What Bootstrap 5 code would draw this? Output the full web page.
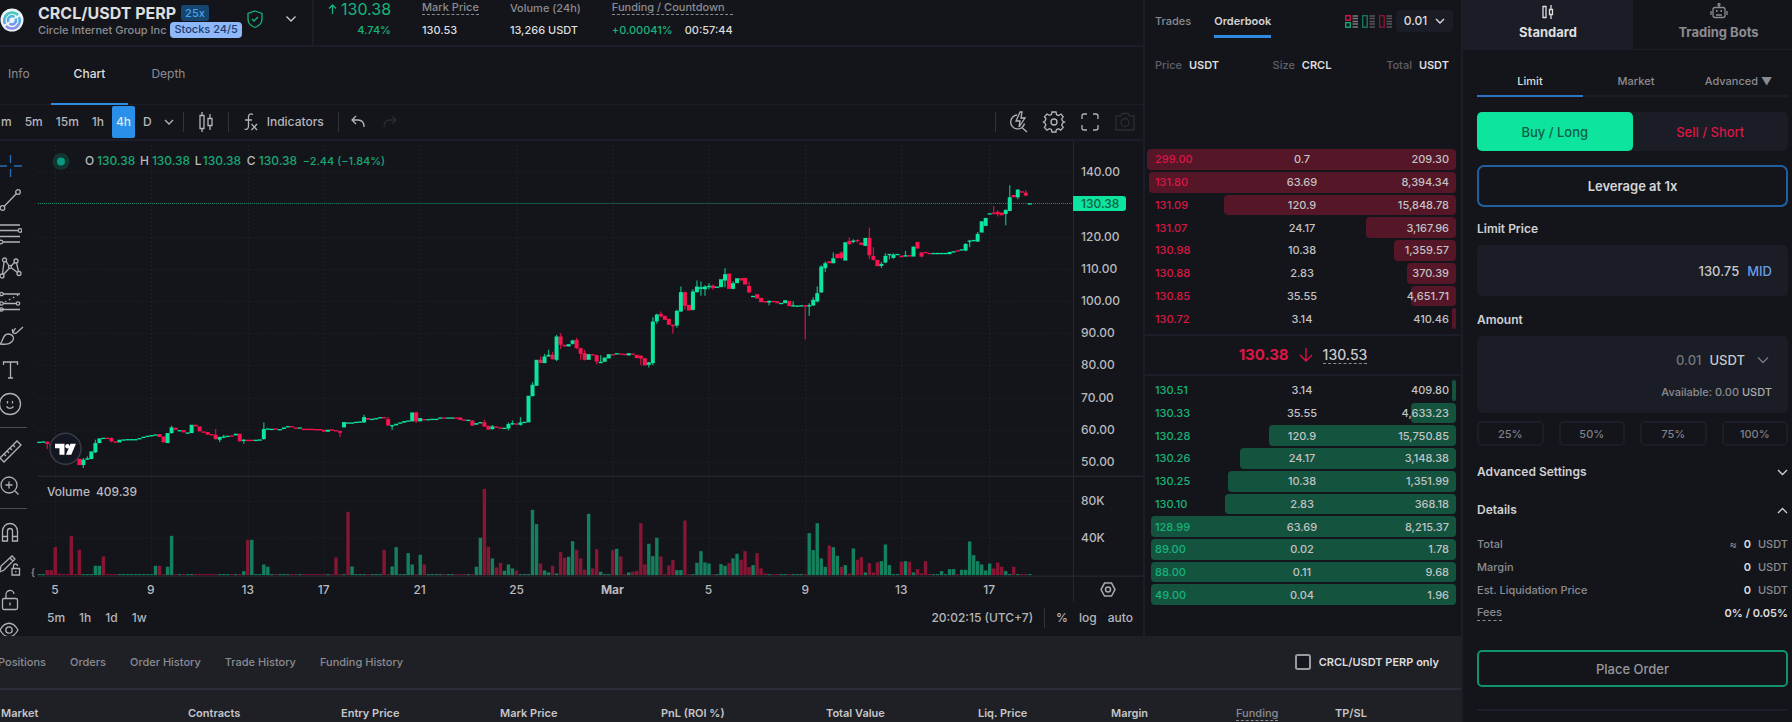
<!DOCTYPE html>
<html lang="en" data-bs-theme="dark">
<head>
<meta charset="utf-8">
<meta name="viewport" content="width=device-width, initial-scale=1">
<title>CRCL/USDT PERP</title>
<link rel="stylesheet" href="https://cdn.jsdelivr.net/npm/bootstrap@5.3.0/dist/css/bootstrap.min.css">
<style>
:root{--bg:#14151a;--line:#1d1d29;--panel:#1a1d25;--dim:#8b8c92;--txt:#c9c9cc;--hi:#dededf;--green:#14b57c;--mint:#0de59e;--red:#dc1646;--blue:#2f8be0}
body{background:var(--bg);color:var(--txt);font-family:Inter,"Liberation Sans",sans-serif;font-size:11px;font-weight:500;line-height:16px;overflow:hidden}
button,.bare{background:none;border:0;padding:0;color:inherit;font:inherit}
svg{display:block;flex:none;fill:none;stroke:currentColor;stroke-width:1.3}
a{color:inherit;text-decoration:none}
.terminal{min-height:100vh}
.dim{color:var(--dim)}.hi{color:var(--hi)}.up{color:var(--green)}.down{color:var(--red)}
.hint{border-bottom:1px dashed #8b8c92;line-height:14px}
.bl{border-left:2px solid var(--line)}.bb{border-bottom:2px solid var(--line)}
.market-head{height:47px;white-space:nowrap}
.pair{width:312px}
.pair-name{font-size:16px;line-height:18px;font-weight:700}
.lev{background:#16466f;color:#4aa3ea;border-radius:3px;padding:0 4px;height:16px}
.stock-tag{background:#8fb8f8;color:#1d3c70;border-radius:4px;padding:0 4px;line-height:15px}
.stats{gap:31px;padding-left:14px}
.stats>div{display:flex;flex-direction:column;gap:6px}
.last-price{font-size:16px;line-height:18px;font-weight:400}
.view-tabs{height:58px;border-bottom:1px solid var(--line);font-size:12px;font-weight:400}
.view-tabs a{padding:19px 23px 0;color:var(--dim);height:58px}
.view-tabs a.active{color:var(--hi);font-weight:500;border-bottom:2px solid var(--blue)}
.view-tabs a:first-child{padding:19px 21px 0 8px}
.toolbar{height:36px;color:#b4b5ba;font-size:12px;padding-left:1px}
.toolbar .vr,.chart-foot .vr{align-self:center;min-height:0;opacity:1;background:#33343b;height:20px;width:1px}
.toolbar button.on{background:#2a8fe9;color:#dbe6f3;width:23px;height:32px;border-radius:2px}
.tools{width:30px;color:#b0b1b7;margin-bottom:-10px}
.tools hr{margin:6px 0;width:27px;border-color:#4a4b53;opacity:1}
.tools button{height:34px;display:flex;align-items:center}
.plot{width:100%;height:auto}
.plot text{stroke:none;fill:#b9babf;font-size:12px}
.plot .move{font-size:11px;fill:#1aa876}
.chart-foot{height:32px;font-size:12px;color:#b4b5ba}
.dock{background:#1f2026}
.dock-tabs{height:54px;border-bottom:2px solid #2b2e38}
.dock-tabs a{color:var(--dim)}
.dock table{width:100%;table-layout:fixed;margin:0}
.dock th{font-weight:600;color:#c6c6c9;padding:15px 0 0 1px;line-height:16px}
.tickbox{width:16px;height:16px;margin:0;border:2px solid #9a9ba0;border-radius:0;background:#14171d}
.book{width:318px;flex:none;border-left:2px solid var(--line)}
.book-tabs{height:46px}
.book-tabs a{padding-top:13px;height:38px}
.book-tabs a.active{border-bottom:3px solid var(--blue);color:#d4d4d7;font-weight:600}
.tick-select{background:var(--panel);border-radius:4px;height:22px;width:57px;color:var(--hi);font-size:12px}
.cols{display:grid;grid-template-columns:1fr 1fr 1fr}
.cols>:nth-child(2){text-align:center}.cols>:nth-child(3){text-align:right}
.ladder{display:grid;grid-auto-rows:1fr;gap:2px}
.level{position:relative;align-items:center;padding:0 7px 0 8px;color:#c2c3c5}
.level>span{position:relative;z-index:1}
.level>i{position:absolute;right:0;top:0;bottom:0;border-radius:4px}
.asks{height:180px;margin:76px 5px 5px 2px}.bids{height:225px;margin:4px 5px 31px 2px}
.asks i{background:#551627}.bids i{background:#14543f}
.asks .level>:nth-child(1){color:var(--red)}.bids .level>:nth-child(1){color:var(--green)}
.mid{height:42px;border-top:2px solid var(--line);border-bottom:2px solid var(--line);font-size:14px}
.ticket{width:331px;flex:none;border-left:2px solid var(--line)}
.modes{height:50px;border-bottom:1px solid var(--line);font-weight:700;font-size:13px}
.modes button{color:var(--dim)}
.modes button.on{background:var(--panel);color:var(--hi)}
.ticket-body{padding:14px 4px 0 14px}
.kinds{border-bottom:2px solid #1b1d27;height:33px}
.kinds a{color:var(--dim);text-align:center;height:33px;line-height:34px;white-space:nowrap}
.kinds a.active{color:var(--hi);border-bottom:2px solid #2c74bd}
.sides{background:var(--panel);border-radius:5px;height:39px;margin-top:15px;font-size:13px}
.sides button{border-radius:5px}
.sides .on{background:var(--mint);color:#0e5f47}
.lever{height:42px;border:2px solid #225f9e;border-radius:7px;margin-top:14px;color:#d6d6d8;font-weight:600;font-size:13px}
.cap{font-weight:600;color:#d0d0d3;font-size:12px}
.field{background:var(--panel);border-radius:5px;padding-right:16px;font-size:13px}
.field input{width:70px;text-align:right;outline:0}
.field input::placeholder{color:#74757c;opacity:1}
.pcts{gap:15px;margin-top:8px}
.pcts button{flex:1;height:25px;border:2px solid #1c1d28;border-radius:5px;color:#808188}
.acc{height:38px}
.facts{margin:7px 0 0;display:grid;gap:7px}
.facts dt{font-weight:500;color:var(--dim)}
.place{height:37px;border:2px solid #10936a;border-radius:5px;margin-top:29px;color:#97989d;font-size:13px}
</style>
</head>
<body>
<div class="terminal d-flex">
<div class="flex-fill d-flex flex-column" style="min-width:0">
<div class="d-flex">
<main class="flex-fill" style="min-width:0">
  <header class="market-head d-flex bb">
    <div class="pair d-flex align-items-start">
      <svg width="24" height="24" viewBox="0 0 24 24" style="margin:8px 14px 0 0" stroke="none"><defs><linearGradient id="ring" x1="0" y1="0" x2="0" y2="24" gradientUnits="userSpaceOnUse"><stop offset="0" stop-color="#3fd9a4"/><stop offset=".5" stop-color="#55aee8"/><stop offset="1" stop-color="#a77bf0"/></linearGradient></defs><circle cx="12" cy="12" r="11.5" fill="#eef3f6" stroke="none"/><g stroke="url(#ring)" stroke-width="2.6"><path d="M5 16a8 8 0 0 1 13-9"/><path d="M19 9a8 8 0 0 1-13 9"/><path d="M8.500 14a4 4 0 0 1 6-5M15.500 10.500a4 4 0 0 1-6 5"/></g></svg>
      <div>
        <div class="d-flex align-items-center pt-1" style="gap:5px"><h1 class="pair-name hi m-0">CRCL/USDT PERP</h1><span class="lev">25x</span></div>
        <div class="d-flex gap-1"><span class="dim">Circle Internet Group Inc</span><span class="stock-tag">Stocks 24/5</span></div>
      </div>
      <div class="d-flex ms-auto align-items-center" style="gap:21px;padding:9px 15px 0 0">
      <svg class="up" width="18" height="20" viewBox="0 0 18 20" stroke-width="1.6"><path d="M9 2l7 2.500v5.500c0 4-3 7-7 8.500-4-1.500-7-4.500-7-8.500V4.500z"/><path d="M6 10l2 2 4-4"/></svg>
      <svg width="12" height="8" viewBox="0 0 12 8" stroke-width="1.7"><path d="M1.500 1.500L6 6l4.500-4.500"/></svg>
      </div>
    </div>
    <div class="stats bl d-flex">
      <div class="text-end up" style="gap:4px"><span class="last-price d-flex align-items-center gap-1"><svg width="9" height="10" viewBox="0 0 9 10"><path d="M4.500 10V1M1 4.500L4.500 1 8 4.500"/></svg>130.38</span><span>4.74%</span></div>
      <div><span class="dim hint">Mark Price</span><span class="hi" style="margin-top:1px">130.53</span></div>
      <div><span class="dim">Volume (24h)</span><span class="hi">13,266 USDT</span></div>
      <div><span class="dim hint">Funding / Countdown</span><span class="d-flex" style="gap:12px;margin-top:1px"><span class="up">+0.00041%</span><span class="hi">00:57:44</span></span></div>
    </div>
  </header>
  <nav class="view-tabs d-flex"><a href="#">Info</a><a href="#" class="active">Chart</a><a href="#">Depth</a></nav>
  <div class="toolbar d-flex align-items-center bb">
    <div class="d-flex align-items-center" style="gap:13px"><button>m</button><button>5m</button><button>15m</button><button>1h</button></div>
    <button class="on" style="margin:0 8px">4h</button><button>D</button>
    <button class="px-1" style="margin:0 5px 0 8px" aria-label="Intervals"><svg width="10" height="6" viewBox="0 0 10 6"><path d="M1 1l4 4 4-4"/></svg></button>
    <span class="vr"></span>
    <button style="margin:0 14px" aria-label="Candles"><svg width="16" height="24" viewBox="0 0 16 24"><path d="M4 2v3M4 19v3M2 5.500h4v13h-4zM12 4v4M12 16v4M10 8.500h4v7h-4z"/></svg></button>
    <span class="vr"></span>
    <button class="d-flex align-items-center" style="gap:9px;margin:0 14px"><svg width="15" height="20" viewBox="0 0 15 20"><path d="M10 2.500C7 1 5.500 2.500 5.500 5v9c0 3-2 4-4 3M2 8h7M8.500 12l5.500 6M14 12l-5.500 6"/></svg>Indicators</button>
    <span class="vr"></span>
    <button style="margin:0 18px 0 12px" aria-label="Undo"><svg width="14" height="14" viewBox="0 0 14 14"><path d="M5 1L1 5l4 4M1 5h6c4 0 6 3 6 7"/></svg></button>
    <button style="color:#2b2c33" aria-label="Redo"><svg width="14" height="14" viewBox="0 0 14 14"><path d="M9 1l4 4-4 4M13 5H7c-4 0-6 3-6 7"/></svg></button>
    <div class="d-flex align-items-center ms-auto" style="gap:13px;padding-right:7px">
      <span class="vr"></span>
      <svg width="20" height="24" viewBox="0 0 20 24"><path d="M8 5a7 7 0 1 0 7.500 8.500M13.500 18l4.500 4M11 2L7 11h4l-1 6 6-9h-4l1-6z"/></svg>
      <svg width="24" height="24" viewBox="0 0 24 24" stroke-width="1.5"><path d="M10 2h4l.6 2.700 2 .8 2.400-1.500 2.200 2.800-1.500 2.200.8 2L22.500 12l-2 1.200-.8 2 1.500 2.300-2.600 2.600-2.300-1.300-2 .8L14 22h-4l-.6-2.500-2-.8-2.400 1.400-2.600-2.700 1.500-2.200-.8-2L1.500 12l1.700-1.200.7-2-1.400-2.100L5 4l2.400 1.400 2-.8z"/><circle cx="12" cy="12" r="3"/></svg>
      <svg width="22" height="22" viewBox="0 0 22 22" stroke-width="1.6"><path d="M3 8V5a2 2 0 0 1 2-2h3M14 3h3a2 2 0 0 1 2 2v3M19 14v3a2 2 0 0 1-2 2h-3M8 19H5a2 2 0 0 1-2-2v-3"/></svg>
      <svg width="22" height="20" viewBox="0 0 22 20" color="#2b2c33"><path d="M2 4h4.500l1.500-2.500h6L15.500 4H20v14H2z"/><circle cx="11" cy="10.500" r="4"/></svg>
    </div>
  </div>
  <div class="d-flex">
    <div class="tools pt-2" role="toolbar">
      <button aria-label="Cross" style="color:#2370b8"><svg width="22" height="24" viewBox="0 0 22 24"><path d="M10.500 1v8M10.500 15v8M0 12h7M14 12h8"/></svg></button>
      <button aria-label="Trend line"><svg width="22" height="24" viewBox="0 0 22 24"><circle cx="18" cy="4" r="2.300"/><circle cx="2.500" cy="20" r="2.300"/><path d="M4 18.500L16.500 5.500"/></svg></button>
      <button aria-label="Fibonacci"><svg width="22" height="24" viewBox="0 0 22 24"><path d="M0 3h20M0 8.500h18M0 14.500h20M3 20h17"/><circle cx="20" cy="8.500" r="1.800"/><circle cx="1" cy="20" r="1.800"/></svg></button>
      <button aria-label="Pattern"><svg width="22" height="24" viewBox="0 0 22 24"><circle cx="4.500" cy="4" r="2"/><circle cx="16" cy="5" r="2"/><circle cx="2" cy="20" r="2"/><circle cx="19" cy="17.500" r="2"/><circle cx="10" cy="11" r="1.500"/><path d="M4 6L2.500 18M6 5l3 5M11 10l4-4M16.500 7l2 8.500M3.500 18.500L9 12.500M11.500 12l6 4.500"/></svg></button>
      <button aria-label="Forecast"><svg width="22" height="24" viewBox="0 0 22 24"><path d="M3 4h17M3 13.500h13M0 19.500h20"/><circle cx="1.500" cy="4" r="1.700"/><circle cx="1.500" cy="13.500" r="1.700"/><circle cx="18" cy="13.500" r="1.700"/><circle cx="1.500" cy="19.500" r="1.700"/><path d="M5 12L20 4" stroke-dasharray="1.500 3"/></svg></button>
      <button aria-label="Brush"><svg width="24" height="24" viewBox="0 0 24 24"><path d="M0 20c3-1 2-10 8-10 5 0 7 4 4 7.500-3 3.500-8 3-12 2.500zM12.500 5c-.5 4 2 6 5 3l5.500-5M15.500 4l-3 5"/></svg></button>
      <button aria-label="Text"><svg width="22" height="24" viewBox="0 0 22 24" stroke-width="1.500"><path d="M3.500 7V4h14v3M10.500 4v16M8 20h5"/></svg></button>
      <button aria-label="Emoji"><svg width="22" height="24" viewBox="0 0 22 24"><circle cx="10" cy="12" r="10.500"/><path d="M6.500 14.500c2 2.500 5 2.500 7 0M7.500 9v2.500M12.500 9v2.500"/></svg></button>
      <hr>
      <button aria-label="Measure"><svg width="22" height="24" viewBox="0 0 22 24"><path d="M0 19L17 2l4 4L4 23zM4 15l2 2M7 12l2 2M10 9l2 2M13 6l2 2"/></svg></button>
      <button aria-label="Zoom in"><svg width="22" height="24" viewBox="0 0 22 24"><circle cx="9" cy="12" r="8"/><path d="M15 18l3.500 3.500M9 8.500v7M5.500 12h7"/></svg></button>
      <hr>
      <button aria-label="Magnet"><svg width="22" height="24" viewBox="0 0 22 24"><path d="M2.500 21v-10a7.500 7.500 0 0 1 15 0v10h-5v-10a2.500 2.500 0 0 0-5 0v10zM2.500 16.500h5M12.500 16.500h5"/></svg></button>
      <button aria-label="Keep drawing"><svg width="22" height="24" viewBox="0 0 22 24"><path d="M0 17l1-5L12 2l3 3L4 16l-4 2M10 4l3 3M12 14.500h7.500v6.500H12zM13.500 14.500v-2.500a2 2 0 0 1 4 0M15.800 17v1.500"/></svg></button>
      <button aria-label="Lock"><svg width="22" height="24" viewBox="0 0 22 24"><rect x="2.500" y="10.500" width="15" height="11" rx="1.500"/><path d="M6 10V7a4 4 0 0 1 8-1M10 14.500v3"/></svg></button>
      <button aria-label="Hide" style="height:26px"><svg width="22" height="16" viewBox="0 0 22 16"><path d="M0 8c5-9 13-9 18 0-5 9-13 9-18 0z"/><circle cx="9" cy="8" r="3.200"/></svg></button>
    </div>
    <div class="flex-fill" style="min-width:0">
      <svg class="plot" id="plot" viewBox="30 141 1114 463" role="img" aria-label="Price and volume"></svg>
      <div class="chart-foot d-flex align-items-center">
        <div class="d-flex" style="gap:14px;padding:0 0 4px 17px"><button>5m</button><button>1h</button><button>1d</button><button>1w</button></div>
        <div class="d-flex align-items-center ms-auto" style="gap:11px;padding:0 10px 4px 0"><span>20:02:15 (UTC+7)</span><span class="vr"></span><button>%</button><button>log</button><button>auto</button></div>
      </div>
    </div>
  </div>
</main>

<section class="book">
  <div class="book-tabs d-flex" style="padding:0 8px 0 10px">
    <a href="#" class="dim" style="margin-right:23px">Trades</a><a href="#" class="active">Orderbook</a>
    <div class="d-flex ms-auto gap-1" style="padding:10px 0 0">
      <svg width="13" height="13" viewBox="0 0 13 13" style="margin-top:5px"><rect x=".7" y=".7" width="4.500" height="4.500" stroke="#dc1646"/><rect x=".7" y="7.700" width="4.500" height="4.500" stroke="#14b57c"/><path d="M7.500 1H13M7.500 3.500H13M7.500 6.500H13M7.500 9H13M7.500 12H13" stroke="#77787e"/></svg>
      <svg width="13" height="13" viewBox="0 0 13 13" style="margin-top:5px"><rect x=".7" y=".7" width="4.500" height="11.500" stroke="#14805a"/><path d="M7.500 1H13M7.500 3.500H13M7.500 6.500H13M7.500 9H13M7.500 12H13" stroke="#55565c"/></svg>
      <svg width="13" height="13" viewBox="0 0 13 13" style="margin-top:5px"><rect x=".7" y=".7" width="4.500" height="11.500" stroke="#8f1535"/><path d="M7.500 1H13M7.500 3.500H13M7.500 6.500H13M7.500 9H13M7.500 12H13" stroke="#55565c"/></svg>
      <button class="tick-select d-flex align-items-center justify-content-center gap-2">0.01<svg width="10" height="6" viewBox="0 0 10 6" stroke-width="1.700"><path d="M1 1l4 4 4-4"/></svg></button>
    </div>
  </div>
  <div class="cols" style="padding:11px 12px 0 10px;color:#5f6068"><span>Price <b class="hi ms-1 fw-semibold">USDT</b></span><span>Size <b class="hi ms-1 fw-semibold">CRCL</b></span><span>Total <b class="hi ms-1 fw-semibold">USDT</b></span></div>
  <div class="ladder asks" id="asks"></div>
  <div class="mid d-flex align-items-center justify-content-center"><b class="down" style="font-size:15px">130.38</b><svg class="down" width="14" height="16" viewBox="0 0 14 16" style="margin:0 10px" stroke-width="1.800"><path d="M7 1v13M1 8l6 6 6-6"/></svg><span class="hint" style="line-height:16px">130.53</span></div>
  <div class="ladder bids" id="bids"></div>
</section>
</div>

<section class="dock flex-fill">
  <div class="dock-tabs d-flex align-items-center" style="gap:24px;padding-right:22px">
    <a href="#" class="hi" style="margin-left:-2px">Positions</a><a href="#">Orders</a><a href="#">Order History</a><a href="#">Trade History</a><a href="#">Funding History</a>
    <label class="d-flex align-items-center gap-2 ms-auto hi fw-semibold"><input type="checkbox" class="form-check-input tickbox">CRCL/USDT PERP only</label>
  </div>
  <table>
    <colgroup><col style="width:187px"><col style="width:153px"><col style="width:159px"><col style="width:161px"><col style="width:165px"><col style="width:152px"><col style="width:133px"><col style="width:125px"><col style="width:99px"><col></colgroup>
    <thead><tr><th>Market</th><th>Contracts</th><th>Entry Price</th><th>Mark Price</th><th>PnL (ROI %)</th><th>Total Value</th><th>Liq. Price</th><th>Margin</th><th><span class="hint dim fw-medium">Funding</span></th><th>TP/SL</th></tr></thead>
  </table>
</section>
</div>

<aside class="ticket">
  <div class="modes d-flex">
    <button class="on d-flex flex-column align-items-center" style="width:170px;padding-top:5px;gap:5px"><svg width="14" height="14" viewBox="0 0 14 14" stroke-width="1.500"><path d="M2 1.500h3v11H2zM10 0v4M10 10v4M8.500 4.500h3v5h-3z"/></svg>Standard</button>
    <button class="flex-fill d-flex flex-column align-items-center" style="padding:3px 0 0 12px;gap:5px"><svg width="18" height="16" viewBox="0 0 18 16" stroke-width="1.500"><rect x="3" y="4.500" width="12" height="10" rx="2"/><path d="M9 4.500V2M1 8v4M17 8v4M6 12h6"/><circle cx="9" cy="1.500" r="1"/><path d="M6 8h1.500M10.500 8H12" stroke-width="2"/></svg>Trading Bots</button>
  </div>
  <form class="ticket-body" onsubmit="return false">
    <nav class="kinds d-flex"><a href="#" class="active" style="width:106px">Limit</a><a href="#" style="width:106px">Market</a><a href="#" class="flex-fill">Advanced ▼</a></nav>
    <div class="sides d-flex"><button type="button" class="on w-50">Buy / Long</button><button type="button" class="down w-50">Sell / Short</button></div>
    <button type="button" class="lever w-100">Leverage at 1x</button>
    <label class="cap d-block" for="lp" style="margin:14px 0 8px">Limit Price</label>
    <div class="field d-flex align-items-center justify-content-end gap-2" style="height:51px"><input id="lp" class="bare" value="130.75"><button type="button" style="color:#6b9be8">MID</button></div>
    <label class="cap d-block" for="am" style="margin:16px 0 8px">Amount</label>
    <div class="field" style="height:77px;padding-top:16px">
      <div class="d-flex align-items-center justify-content-end gap-2"><input id="am" class="bare" placeholder="0.01"><button type="button" class="d-flex align-items-center" style="gap:12px">USDT<svg width="12" height="8" viewBox="0 0 12 8" color="#77787e" style="margin-right:3px"><path d="M1 1.500l5 5 5-5"/></svg></button></div>
      <div class="dim text-end" style="margin-top:16px;font-size:11px">Available: 0.00 <span style="color:#aaabaf">USDT</span></div>
    </div>
    <div class="pcts d-flex"><button type="button">25%</button><button type="button">50%</button><button type="button">75%</button><button type="button">100%</button></div>
    <button type="button" class="acc cap w-100 d-flex align-items-center justify-content-between" style="margin-top:7px">Advanced Settings<svg width="11" height="7" viewBox="0 0 11 7"><path d="M1 1l4.500 4.500L10 1"/></svg></button>
    <button type="button" class="acc cap w-100 d-flex align-items-center justify-content-between">Details<svg width="11" height="7" viewBox="0 0 11 7"><path d="M1 6l4.500-4.500L10 6"/></svg></button>
    <dl class="facts">
      <div class="d-flex justify-content-between"><dt>Total</dt><dd class="m-0 dim">≈ <b class="hi fw-semibold mx-1">0</b> USDT</dd></div>
      <div class="d-flex justify-content-between"><dt>Margin</dt><dd class="m-0 dim"><b class="hi fw-semibold me-1">0</b> USDT</dd></div>
      <div class="d-flex justify-content-between"><dt>Est. Liquidation Price</dt><dd class="m-0 dim"><b class="hi fw-semibold me-1">0</b> USDT</dd></div>
      <div class="d-flex justify-content-between"><dt class="hint">Fees</dt><dd class="m-0 hi fw-semibold">0% / 0.05%</dd></div>
    </dl>
    <button type="submit" class="place w-100">Place Order</button>
    <div style="border-top:2px solid var(--line);margin-top:22px"></div>
  </form>
</aside>
</div>

<script src="https://cdn.jsdelivr.net/npm/bootstrap@5.3.0/dist/js/bootstrap.bundle.min.js"></script>
<script>
// order book: price, size, total, depth in percent
const asks=[['299.00','0.7','209.30',100],['131.80','63.69','8,394.34',99.4],['131.09','120.9','15,848.78',75],['131.07','24.17','3,167.96',29],['130.98','10.38','1,359.57',20],['130.88','2.83','370.39',16],['130.85','35.55','4,651.71',14.6],['130.72','3.14','410.46',1.3]];
const bids=[['130.51','3.14','409.80',1.3],['130.33','35.55','4,633.23',14.6],['130.28','120.9','15,750.85',60.4],['130.26','24.17','3,148.38',69.8],['130.25','10.38','1,351.99',73.7],['130.10','2.83','368.18',74.7],['128.99','63.69','8,215.37',98.7],['89.00','0.02','1.78',98.7],['88.00','0.11','9.68',98.7],['49.00','0.04','1.96',98.7]];
const rows=l=>l.map(r=>`<div class="level cols"><span>${r[0]}</span><span>${r[1]}</span><span>${r[2]}</span><i style="width:${r[3]}%"></i></div>`).join('');
document.getElementById('asks').innerHTML=rows(asks);
document.getElementById('bids').innerHTML=rows(bids);

// candles: open close [high low], three scale units per plot unit; each part has its own base
const parts=[
[-330,`937 936|937 935|936 943 936 958|943 950|950 958|958 965|965 970|970 976|976 982|982 987|987 1006|1006 990 985 1015|990 986 980 990|988 965|968 940 930 970|940 926|927 924|924 926|925 935 923 938|935 938|938 930|930 929|929 928|929 928|929 928|928 925|925 921|921 918|918 916|916 914|913 922|920 938|940 910|910 893 888 912|894 900|903 901|901 908|910 908|910 885|885 890|890 905|905 907|907 915|913 915|915 928 898 930|930 922 920 937|922 920 915 925|920 918|917 919|917 912|912 935|932 930 928 942|930 932|930 932|932 930|930 929|928 898 878 930|900 896|898 897|896 898|901 898|898 893|893 889|889 893|893 894|894 893|897 899|897 899|897 899|898 900|898 900|900 906|906 900|899 903|901 904|904 909 902 922|893 877|880 878|880 878|879 876|878 875|878 862 855 880|865 870|870 867|867 865|865 862|862 866|868 887 862 888|890 886 885 900|887 882`],
[0,`551 548|549 544|545 542|545 518|518 545 516 550|545 535|538 540|540 538|539 537|539 537|536 533|533 535|535 533|535 533|533 535|533 541|539 541|541 540|542 558|555 550|549 547|548 560 540 562|558 570|568 560 556 570|560 564|563 566|566 564|566 553 548 572|553 550 542 556|551 554|555 548 532 558|548 546|548 468|469 435 427 470|438 360|360 370 350 370|370 350 342 370|350 345 330 350|345 358 336 360|360 290 285 364|290 315 280 328|315 320|320 313|312 302 300 314|300 325 294 328|325 342 324 360|340 360 330 362|360 343|343 345|346 365 345 373|368 366 346 370|366 353|356 343|343 345|344 340|341 344|342 345|347 340|341 345|345 355|348 356 346 376|355 377|375 368 366 383|370 245 232 376|245 224 222 252|222 230 215 232|228 240|237 255|255 257 254 282|257 213 210 264|215 157 140 216|157 198 155 210|195 212|210 155 148 212|157 140 122 158|147 142 125 168|148 140 136 168|141 138 130 148|137 145 134 150|143 140|142 118|122 103 85 142|101 147|147 130 124 148|130 115|115 122|114 134|138 158 126 158|170 168|163 176|174 187|184 188|188 183 182 196|183 185|184 190|191 189|190 181|183 199|198 196 184 200|199 197`],
[-270,`468 466|466 468 466 569|468 466 460 498|467 450 442 468|455 430 410 458|428 350 346 428|355 340 335 366|334 340|340 325 308 340|312 325|308 324 304 328|332 277|273 283 263 284|275 272 268 280|270 273 269 278|278 285|288 264|264 316 233 328|318 330 292 332|330 349|348 342 336 354|338 318 310 340|314 312 312 328|324 314 310 327|314 312|317 322|320 316 303 320|316 320|320 290|276 296|308 320 306 322|306 309|309 311|311 309|311 309|311 309|311 309|313 306|306 304|301 304|300 298|302 282 280 304|276 272 270 292|272 270|275 252 246 276|248 214|228 204|192 190|188 192 168 194|186 193 180 200|188 196|192 180 178 226|183 142 106 184|135 142|142 119 118 148|124 127|128 137 120 138|161 160`]];
// volume bars that stand out, by bar number (negative: falling)
const vol={'-2':-15,'-1':-15,0:-84,1:-4,4:-118,6:-76,10:28,11:28,12:-56,25:28,26:-28,28:25,29:118,47:12,48:-106,49:106,52:32,53:25,70:-53,73:-190,74:26,82:-76,84:26,85:84,88:66,89:32,91:61,92:-32,105:25,106:112,107:-259,108:-85,109:50,110:-23,111:-37,112:13,113:32,114:20,115:-13,119:196,120:153,121:-35,122:14,123:8,124:-28,125:5,126:-69,127:-52,128:55,129:102,130:-76,131:-50,132:-16,133:184,134:-20,135:-78,136:10,139:-75,140:79,141:-56,143:8,144:-10,145:-13,146:-156,147:-32,148:94,149:57,150:112,151:-56,153:-29,154:-45,155:15,156:15,157:-164,160:37,161:72,162:38,163:35,166:33,167:28,168:-36,169:50,170:64,171:-46,172:-72,173:-24,174:30,175:-66,176:-20,177:-5,188:126,189:75,190:156,191:50,192:25,193:-89,194:84,195:58,196:-25,197:30,198:-5,199:80,200:-46,201:-54,202:8,203:-36,204:-8,205:-38,206:42,207:92,208:30,211:-40,212:42,213:-40,214:8,215:-18,216:-5,217:-42,221:12,223:18,224:18,226:16,227:16,228:101,229:60,230:42,231:32,232:14,233:35,234:-20,235:-38,236:-25,237:12,239:-25};
let s='';
const seg=(x1,y1,x2,y2,c,d)=>`<path d="M${x1} ${y1}L${x2} ${y2}" stroke="${c}" stroke-width="1"${d?` stroke-dasharray="${d}"`:''}/>`;
const label=(x,y,t,a)=>`<text x="${x}" y="${y+4}" ${a||''}>${t}</text>`;
[[55,5],[151,9],[248,13],[324,17],[420,21],[517,25],[613,'Mar'],[709,5],[806,9],[902,13],[990,17]].forEach(([x,t])=>{s+=seg(x+.5,145,x+.5,576,'#22232b','2 2')+label(x,590,t,'text-anchor="middle"'+(t=='Mar'?' font-weight="700"':''))});
[[172,140],[237,120],[269,110],[301,100],[333,90],[365,80],[398,70],[430,60],[462,50]].forEach(([y,t])=>{s+=seg(38,y+.5,1074,y+.5,'#1f2028','2 2')+label(1082,y,t+'.00')});
[[501,'80K'],[538,'40K']].forEach(([y,t])=>{s+=seg(38,y+.5,1074,y+.5,'#1f2028','2 2')+label(1082,y,t)});
s+=seg(38,476.5,1144,476.5,'#2b2c35')+seg(38,576.5,1144,576.5,'#2b2c3b')+seg(1074.5,141,1074.5,602,'#26273a');
s+=seg(38,203.5,1074,203.5,'#1d9a72','1 1');
let k=-4;
for(const [base,str] of parts)for(const c of str.split('|')){
  const [o,cl,h,l]=c.split(' ').map(Number),up=cl<o,x=55.3+4.014*k,Y=v=>240+(v+base)/3;
  const v=vol[k]||(up?3:-3);
  s+=`<rect x="${x-1.7}" y="${575.5-Math.abs(v)/3}" width="3.400" height="${Math.abs(v)/3}" fill="${v>0?'#14805e':'#861634'}" stroke="none"/>`;
  if(h)s+=`<path d="M${x} ${Y(h)}V${Y(l)}" stroke="${up?'#11ad7b':'#c01543'}"/>`;
  const t=Math.min(o,cl),b=Math.max(o,cl,t+4);
  s+=`<rect x="${x-2}" y="${Y(t)}" width="4" height="${(b-t)/3}" fill="${up?'#0de59e':'#fb1350'}" stroke="none"/>`;
  k++;
}
s+=`<path d="M1074 196h50q3 0 3 3v9q0 3-3 3h-50z" fill="#0de59e" stroke="none"/>`+label(1082,204,'130.38','style="fill:#0e5f47"');
s+=`<circle cx="61" cy="161.500" r="8.500" fill="#12352f" stroke="none"/><circle cx="61" cy="161.500" r="4" fill="#089981" stroke="none"/>`;
const q=(x,a,b)=>label(x,161,a)+label(x+(a=='L'?8:12),161,b,'style="fill:#1aa876"');
s+=q(85,'O','130.38')+q(140,'H','130.38')+q(195,'L','130.38')+q(247,'C','130.38')+label(303,161,'−2.44 (−1.84%)','class="move"');
s+=label(47,492,'Volume')+label(96,492,'409.39');
s+=`<circle cx="65.500" cy="449" r="15.500" fill="#131722" stroke="#3a3c47" stroke-width="1.500"/><path d="M55 444h9.500v11h-5v-6.500H55zM70.500 444H76l-4.700 11H66z" fill="#fff" stroke="none"/><circle cx="67.500" cy="446.500" r="2.200" fill="#fff" stroke="none"/>`;
s+=`<path d="M34.500 569q-2 0-1.500 2t-1.500 2q2 0 1.500 2t1.500 2" stroke="#85868c"/><path d="M1105.500 583.500h7l3.500 6.500-3.500 6.500h-7l-3.500-6.500z" stroke="#a8a9ae" stroke-width="1.500"/><circle cx="1109" cy="590" r="2.500" stroke="#a8a9ae" stroke-width="1.500"/>`;
document.getElementById('plot').innerHTML=s;
</script>
</body>
</html>
